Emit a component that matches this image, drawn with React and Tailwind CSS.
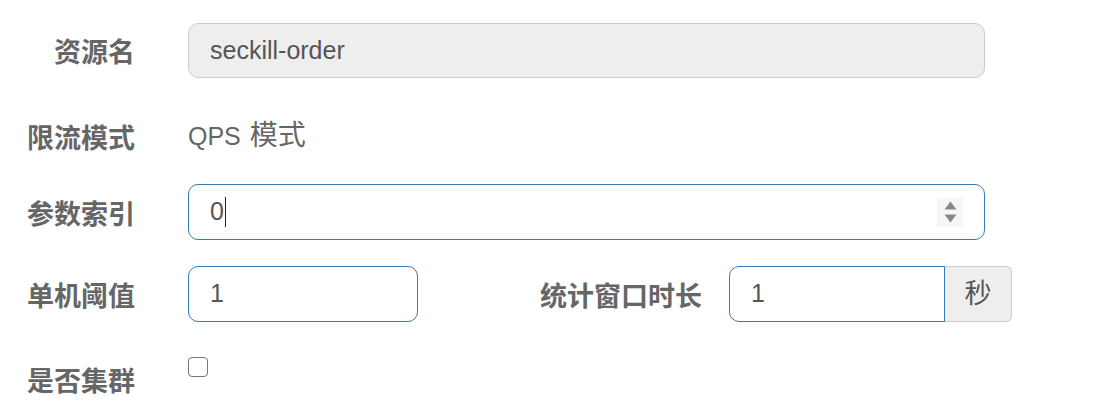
export default function App() {
  const font = { fontFamily: '"Liberation Sans", "Noto Sans CJK SC", sans-serif' };
  const label = "w-[135px] shrink-0 text-right font-bold text-[27px] leading-none text-[#666] pt-[6px]";
  return (
    <div className="w-[1096px] h-[406px] bg-white pt-[23px]" style={font}>
      {/* row 1 */}
      <div className="flex items-center h-[55px]">
        <div className={label}>资源名</div>
        <div className="ml-[53px] w-[797px] h-[55px] rounded-[10px] border border-[#ccc] bg-[#eee] pl-[21px] flex items-center text-[25px] text-[#555]">
          seckill-order
        </div>
      </div>
      {/* row 2 */}
      <div className="flex items-center h-[106px] pt-[10px]">
        <div className={label}>限流模式</div>
        <div className="ml-[53px] text-[25px] text-[#666] leading-none">
          QPS <span className="text-[28px] ml-[2px]">模式</span>
        </div>
      </div>
      {/* row 3 */}
      <div className="flex items-center h-[56px]">
        <div className={label}>参数索引</div>
        <div className="ml-[53px] w-[797px] h-[56px] rounded-[10px] border border-[#337ab7] bg-white pl-[21px] pr-[21px] flex items-center text-[25px] text-[#555]">
          <span>0</span>
          <span className="inline-block w-[1px] h-[30px] bg-[#222] ml-[1px]"></span>
          <div className="ml-auto w-[26px] h-[29px] bg-[#f6f6f6] flex flex-col items-center justify-center gap-[4px]">
            <svg width="13" height="9" viewBox="0 0 13 9"><path d="M6.5 0.5 L12.5 8.5 L0.5 8.5 Z" fill="#888" /></svg>
            <svg width="13" height="9" viewBox="0 0 13 9"><path d="M0.5 0.5 L12.5 0.5 L6.5 8.5 Z" fill="#888" /></svg>
          </div>
        </div>
      </div>
      {/* row 4 */}
      <div className="flex items-center h-[56px] mt-[26px]">
        <div className={label}>单机阈值</div>
        <div className="ml-[53px] w-[230px] h-[56px] rounded-[10px] border border-[#337ab7] bg-white pl-[21px] flex items-center text-[25px] text-[#555]">
          1
        </div>
        <div className="w-[284px] text-right font-bold text-[27px] leading-none text-[#666] pt-[6px]">统计窗口时长</div>
        <div className="ml-[27px] flex h-[56px]">
          <div className="w-[216px] h-full rounded-l-[10px] border border-[#337ab7] bg-white pl-[21px] flex items-center text-[25px] text-[#555]">
            1
          </div>
          <div className="w-[67px] h-full rounded-r-[6px] border border-l-0 border-[#ccc] bg-[#eee] flex items-center justify-center text-[27px] text-[#555]">
            秒
          </div>
        </div>
      </div>
      {/* row 5 */}
      <div className="flex items-start mt-[35px]">
        <div className={label + " mt-[6px]"}>是否集群</div>
        <div className="ml-[53px] w-[20px] h-[20px] rounded-[4px] border-[1.5px] border-[#767676] bg-white"></div>
      </div>
    </div>
  );
}
